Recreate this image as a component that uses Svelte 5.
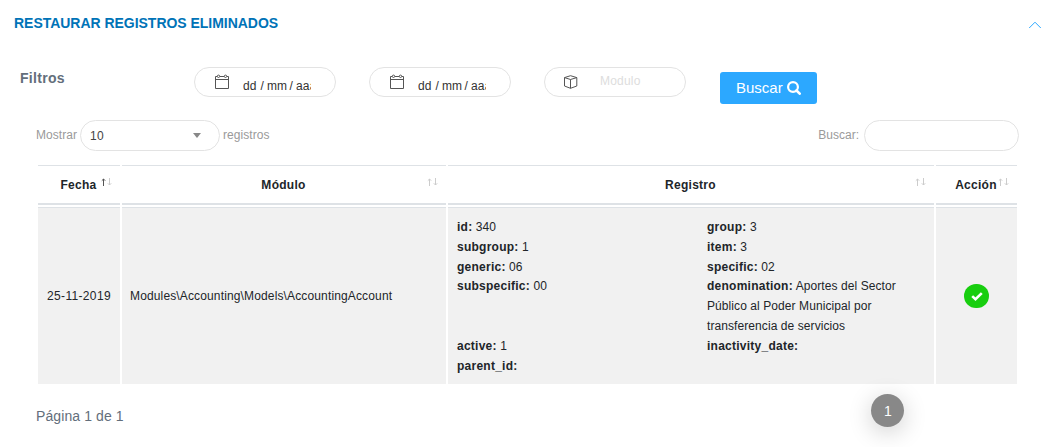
<script>
  const columns = [
    { label: 'Fecha', sorted: true },
    { label: 'Módulo' },
    { label: 'Registro' },
    { label: 'Acción' }
  ];
  const fields = [
    ['id', '340'], ['group', '3'],
    ['subgroup', '1'], ['item', '3'],
    ['generic', '06'], ['specific', '02'],
    ['subspecific', '00'],
    ['denomination', 'Aportes del Sector Público al Poder Municipal por transferencia de servicios'],
    ['active', '1'], ['inactivity_date', ''],
    ['parent_id', '']
  ];
  const module = 'Modules\\Accounting\\Models\\AccountingAccount';
</script>

{#snippet calendar()}
  <svg class="calendar" width="16" height="16" viewBox="0 0 16 16" fill="none" stroke="#555">
    <path d="M3 2.500H1.500V14.500H14.500V2.500H13M6 2.500H10M1.500 5.500H14.500" />
    <circle cx="4.500" cy="2.300" r="1.200" /><circle cx="11.500" cy="2.300" r="1.200" />
  </svg>
{/snippet}

<main>
  <header>
    <h6>RESTAURAR REGISTROS ELIMINADOS</h6>
    <svg width="14" height="8" viewBox="0 0 14 8" fill="none" stroke="#2ca8ff"><path d="M1.200 7L7 1.200L12.800 7" /></svg>
  </header>

  <section class="filters">
    <strong>Filtros</strong>
    {#each [0, 1] as n (n)}
      <div class="pill">
        {@render calendar()}
        <div class="date"><span class="day">dd</span><span class="slash">/</span><span class="month">mm</span><span class="slash">/</span><span class="year">aaaa</span></div>
      </div>
    {/each}
    <div class="pill">
      <svg class="cube" width="16" height="16" viewBox="0 0 16 16" fill="none" stroke="#555" stroke-linejoin="round">
        <path d="M1.500 3.600L7.500 1.700L13.800 3.600V12L7.500 14.300L1.500 12ZM1.500 3.600L7.500 5.500L13.800 3.600M7.500 5.500V14.300" />
      </svg>
      <span class="placeholder">Modulo</span>
    </div>
    <button>Buscar
      <svg width="14" height="14" viewBox="0 0 14 14" fill="none" stroke="#fff" stroke-width="2.200"><circle cx="6" cy="6" r="4.900" /><path d="M9.500 9.500L12.700 12.700" stroke-width="2.600" stroke-linecap="round" /></svg>
    </button>
  </section>

  <section class="tools">
    <span>Mostrar</span>
    <div class="select"><span>10</span><svg width="8" height="5" viewBox="0 0 8 5"><path d="M0 0H8L4 5Z" fill="#888" /></svg></div>
    <span>registros</span>
    <label for="search">Buscar:</label>
    <input id="search" />
  </section>

  <section class="table">
    {#each columns as col (col.label)}
      <div class="th">
        <span>{col.label}</span>
        <svg class="sort" width="12" height="9" viewBox="0 0 12 9" fill="none">
          <path d="M2.500 8V1M.8 2.700L2.500 1L4.200 2.700" stroke={col.sorted ? '#555' : '#ccc'} />
          <path d="M8.500 0V7M6.800 5.300L8.500 7L10.200 5.300" stroke="#ccc" />
        </svg>
      </div>
    {/each}
    <div class="td center day-cell">25-11-2019</div>
    <div class="td">{module}</div>
    <div class="td record">
      {#each fields as [key, value] (key)}
        <div><b>{key}:</b> {value}</div>
      {/each}
    </div>
    <div class="td center action">
      <span class="ok"><svg width="12" height="9" viewBox="0 0 12 9" fill="none" stroke="#fff" stroke-width="2.600"><path d="M1.200 4.100L4.500 7.200L10.800 1.100" /></svg></span>
    </div>
  </section>

  <footer><span>Página 1 de 1</span><span class="page">1</span></footer>
</main>

<style>
  :global(body) { background: #fff; }
  main {
    box-sizing: border-box; width: 1054px; height: 447px; overflow: hidden;
    font-family: "Liberation Sans", Arial, sans-serif; font-size: 12px; color: #212529;
  }
  main * { box-sizing: border-box; }
  svg { display: block; flex: none; }
  header { display: flex; align-items: center; justify-content: space-between; height: 46px; padding: 0 12px 0 14px; }
  header svg { margin-top: 3px; }
  h6 { margin: 0; font-size: 14px; line-height: 20px; letter-spacing: -.03px; color: #0073b7; }
  .filters { display: flex; align-items: flex-start; height: 74px; padding: 21px 0 0 20px; }
  strong { width: 174px; padding-top: 2px; font-size: 14px; line-height: 18px; letter-spacing: .3px; color: #636e7b; }
  .pill { display: flex; width: 142px; height: 30px; margin-right: 33px; padding-left: 19px; border: 1px solid #e3e3e3; border-radius: 15px; }
  .calendar { margin-top: 6px; }
  .cube { margin: 6px 0 0 -1px; }
  .date { display: flex; width: 68px; height: 16px; margin: 10px 0 0 13px; overflow: hidden; line-height: 16px; color: #333; }
  .date span { flex: none; }
  .day { width: 17.500px; }
  .slash { width: 6.500px; }
  .month { width: 22.500px; }
  .date .year { flex: 0 0 15px; overflow: hidden; letter-spacing: .2px; }
  .placeholder { margin: 5px 0 0 21px; line-height: 16px; letter-spacing: .2px; color: #ddd; }
  button { display: flex; align-items: center; gap: 4px; width: 97px; height: 32px; margin: 5px 0 0 1px; padding: 0 0 1px 16px; border: 0; border-radius: 3px; background: #2ca8ff; color: #fff; font: 15px "Liberation Sans", Arial, sans-serif; }
  .tools { display: flex; align-items: center; height: 31px; padding: 0 35px 2px 36px; color: #9a9a9a; }
  .tools > span { letter-spacing: .05px; }
  .select { display: flex; align-items: center; justify-content: space-between; flex: none; width: 140px; height: 31px; margin: 2px 3px 0; padding: 0 18px 0 9px; border: 1px solid #e3e3e3; border-radius: 16px; color: #444; letter-spacing: .2px; }
  label { margin-left: auto; }
  input { width: 155px; height: 31px; margin: 2px 0 0 5px; border: 1px solid #e3e3e3; border-radius: 16px; background: #fff; outline: 0; }
  .table { display: grid; grid-template-columns: 82px 324px 486px 81px; grid-template-rows: 40px 177px; gap: 2px; margin: 14px 0 0 38px; }
  .th { position: relative; display: flex; align-items: center; justify-content: center; padding-right: 1px; border-top: 1px solid #dee2e6; border-bottom: 2px solid #dee2e6; font-weight: bold; letter-spacing: .27px; }
  .sort { position: absolute; right: 7px; top: 12px; }
  .td { display: flex; align-items: center; padding: 2px 8px 0; border-top: 1px solid #dee2e6; background: #f1f1f1; line-height: 19.800px; letter-spacing: .14px; }
  .center { justify-content: center; }
  .day-cell { letter-spacing: .33px; }
  .action { padding-top: 0; }
  .record { display: grid; grid-template-columns: 250px 210px; align-content: center; align-items: start; padding: 2.400px 9px 0; letter-spacing: .08px; }
  b { letter-spacing: .25px; }
  .ok { display: flex; align-items: center; justify-content: center; width: 25px; height: 24px; border-radius: 12.500px; background: #18ce0f; }
  footer { display: flex; justify-content: space-between; padding: 10px 150px 0 36px; font-size: 14px; line-height: 44px; letter-spacing: .1px; color: #636e7b; }
  .page { width: 33px; height: 33px; padding-left: 1px; border-radius: 50%; background: #888; color: #fff; text-align: center; line-height: 34px; box-shadow: 0 5px 25px rgba(0, 0, 0, .2); }
</style>
